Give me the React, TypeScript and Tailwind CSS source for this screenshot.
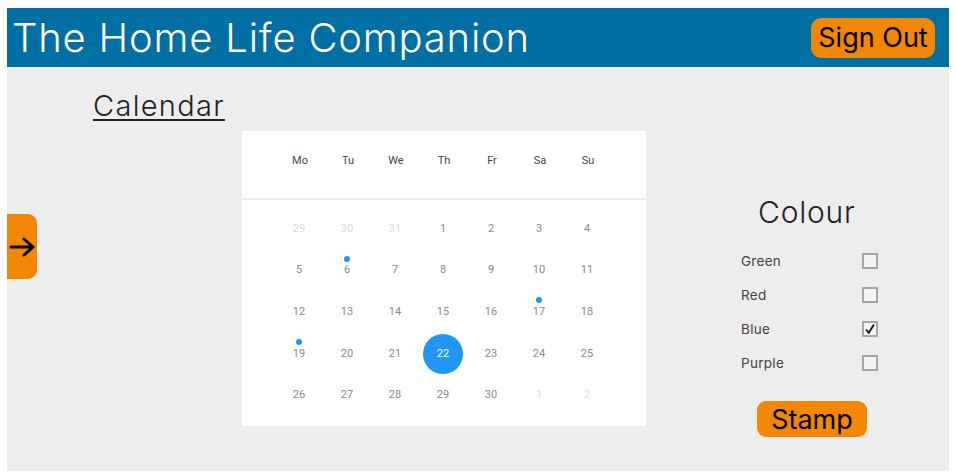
import React from "react";

type Day = { n: number; muted?: boolean; dot?: boolean; selected?: boolean };

const weekDays = ["Mo", "Tu", "We", "Th", "Fr", "Sa", "Su"];

const weeks: Day[][] = [
  [{ n: 29, muted: true }, { n: 30, muted: true }, { n: 31, muted: true }, { n: 1 }, { n: 2 }, { n: 3 }, { n: 4 }],
  [{ n: 5 }, { n: 6, dot: true }, { n: 7 }, { n: 8 }, { n: 9 }, { n: 10 }, { n: 11 }],
  [{ n: 12 }, { n: 13 }, { n: 14 }, { n: 15 }, { n: 16 }, { n: 17, dot: true }, { n: 18 }],
  [{ n: 19, dot: true }, { n: 20 }, { n: 21 }, { n: 22, selected: true }, { n: 23 }, { n: 24 }, { n: 25 }],
  [{ n: 26 }, { n: 27 }, { n: 28 }, { n: 29 }, { n: 30 }, { n: 1, muted: true }, { n: 2, muted: true }],
];

const colours = [
  { label: "Green", checked: false },
  { label: "Red", checked: false },
  { label: "Blue", checked: true },
  { label: "Purple", checked: false },
];

const sans = "font-['Inter',sans-serif]";

function CalendarCard() {
  return (
    <div className="w-[404px] h-[295px] bg-white font-['Roboto',sans-serif]">
      <div className="h-[67px] pt-[23px]">
        <div className="grid grid-cols-7 w-[336px] mx-auto">
          {weekDays.map((d) => (
            <div key={d} className="text-center text-[11px] leading-[14px] text-[#444]">
              {d}
            </div>
          ))}
        </div>
      </div>
      <div className="h-[2px] bg-[#ececec]" />
      <div className="pt-[8px]">
        {weeks.map((week, wi) => (
          <div key={wi} className="grid grid-cols-7 w-[336px] mx-auto -translate-x-[1px]">
            {week.map((day, di) => (
              <div key={di} className="relative h-[41.6px] flex items-center justify-center">
                {day.selected && <div className="absolute w-[40px] h-[40px] rounded-full bg-[#2196f3]" />}
                {day.dot && <div className="absolute top-[6px] left-1/2 -ml-[3px] w-[6px] h-[6px] rounded-full bg-[#2196f3]" />}
                <span
                  className={`relative text-[11px] leading-[14px] ${
                    day.selected ? "text-white" : day.muted ? "text-[#d9d9d9]" : "text-[#8a8a8a]"
                  }`}
                >
                  {day.n}
                </span>
              </div>
            ))}
          </div>
        ))}
      </div>
    </div>
  );
}

function ColourPanel() {
  return (
    <div className={`mt-[125px] ml-[95px] w-[140px] flex flex-col ${sans}`}>
      <div className="ml-[17px] text-[30px] leading-[40px] font-light tracking-[0.8px] text-[#222]">Colour</div>
      <div className="mt-[12px] flex flex-col">
        {colours.map((c) => (
          <div key={c.label} className="h-[34px] flex items-center justify-between pr-[3px]">
            <span className="text-[13.5px] tracking-[0.3px] text-[#444]">{c.label}</span>
            <span className="w-[16px] h-[16px] border-2 border-[#a6a6a6] bg-[#f4f4f4] flex items-center justify-center">
              {c.checked && (
                <svg width="12" height="12" viewBox="0 0 12 12">
                  <path d="M2 6.5 L4.8 9.8 L10 1.5" fill="none" stroke="#111" strokeWidth="1.8" />
                </svg>
              )}
            </span>
          </div>
        ))}
      </div>
      <button className="mt-[21px] ml-[16px] w-[110px] h-[36px] rounded-[9px] bg-[#f28705] text-[27px] leading-none text-black">
        Stamp
      </button>
    </div>
  );
}

export default function App() {
  return (
    <div className="w-[957px] h-[476px] bg-white pt-[8px] pl-[7px]">
      <div className="w-[942px] h-[463px] bg-[#ededed] flex flex-col">
        <div className={`h-[59px] bg-[#0070a4] flex items-center justify-between pl-[5px] pr-[14px] ${sans}`}>
          <h1 className="text-[40px] font-light text-white leading-none tracking-[0.8px]">The Home Life Companion</h1>
          <button className="w-[124px] h-[40px] rounded-[10px] bg-[#f28705] text-[27px] leading-none text-black">
            Sign Out
          </button>
        </div>
        <div className="flex flex-1">
          <div className="mt-[147px] w-[30px] h-[65px] bg-[#f28705] rounded-r-[9px] flex items-center justify-end pr-[1px]">
            <svg width="27" height="22" viewBox="0 0 27 22">
              <path d="M2 11 H24 M15 3 L24 11 L15 19" fill="none" stroke="#000" strokeWidth="3" strokeLinecap="round" strokeLinejoin="round" />
            </svg>
          </div>
          <div className="flex flex-col">
            <div className={`ml-[56px] mt-[17px] h-[47px] text-[29px] font-light tracking-[1.3px] text-[#222] underline decoration-[2px] underline-offset-[3px] ${sans}`}>
              Calendar
            </div>
            <div className="ml-[205px]">
              <CalendarCard />
            </div>
          </div>
          <ColourPanel />
        </div>
      </div>
    </div>
  );
}
